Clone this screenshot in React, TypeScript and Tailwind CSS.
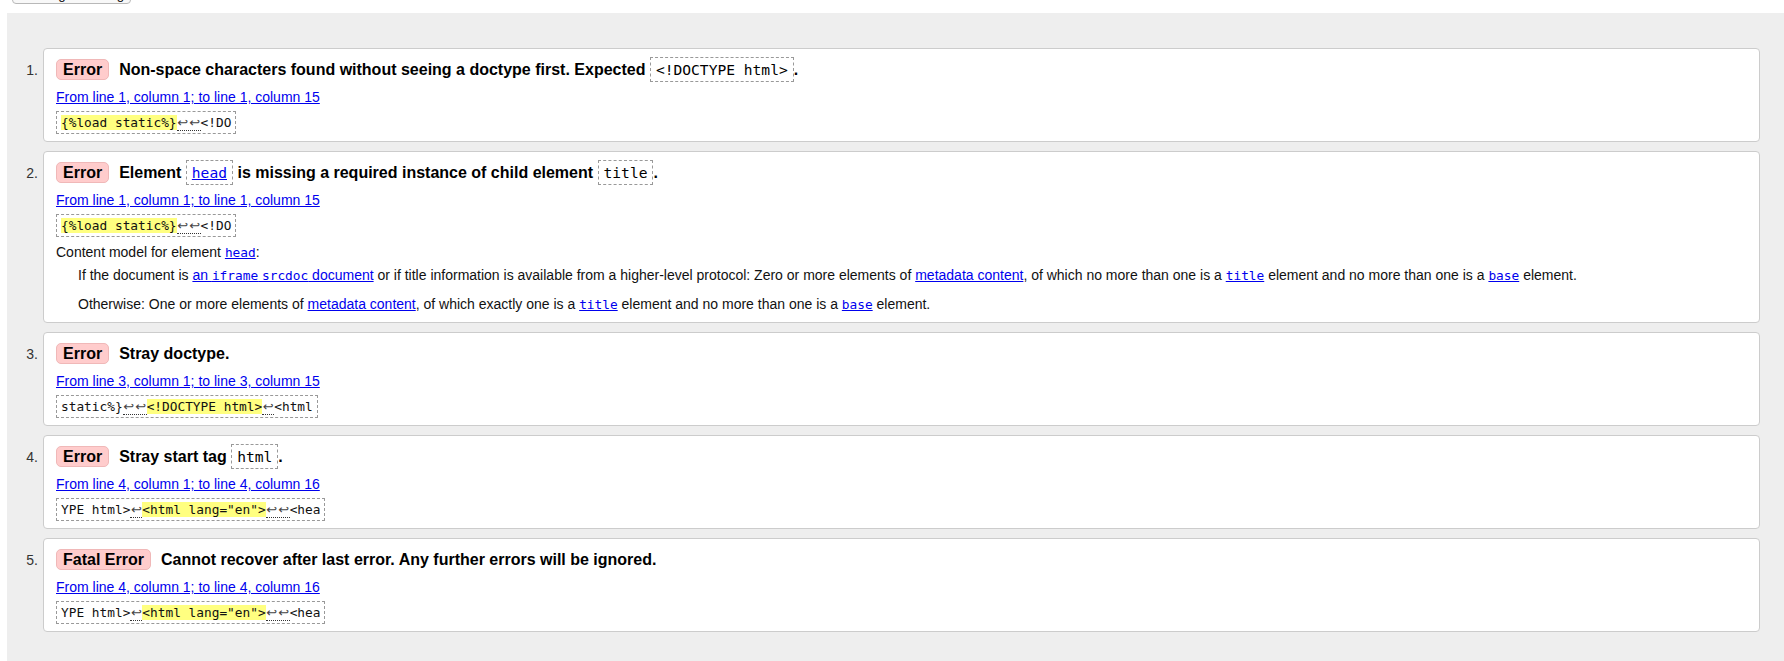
import React from "react";

type Seg = { t: string; k: "plain" | "hl" | "lf" };

interface Message {
  n: number;
  type: string;
  title: React.ReactNode;
  loc: string;
  extract: Seg[];
  extra?: React.ReactNode;
}

const sans = "font-['Liberation_Sans',Arial,sans-serif]";
const mono = "font-['DejaVu_Sans_Mono','Liberation_Mono',monospace]";

function TitleCode({ children }: { children: React.ReactNode }) {
  return (
    <code
      className={`${mono} inline-block border border-dashed border-[#999] px-[5px] text-[14.6px] leading-[23px] font-normal`}
    >
      {children}
    </code>
  );
}

function Link({ children }: { children: React.ReactNode }) {
  return <a className="text-[#0000ee] underline cursor-pointer">{children}</a>;
}

function MonoLink({ children }: { children: React.ReactNode }) {
  return (
    <a className={`${mono} text-[#0000ee] underline cursor-pointer text-[12.8px]`}>{children}</a>
  );
}

function Extract({ segs }: { segs: Seg[] }) {
  return (
    <code
      className={`${mono} inline-block border border-dashed border-[#999] px-[4px] text-[12.8px] leading-[21px] text-[#111] whitespace-pre`}
    >
      {segs.map((s, i) => {
        if (s.k === "hl")
          return (
            <span key={i} className="bg-[#ffff80]">
              {s.t}
            </span>
          );
        if (s.k === "lf")
          return (
            <span key={i} className="border-b border-dotted border-[#333]">
              {s.t.split("").map((c, j) => (
                <span
                  key={j}
                  className="inline-block w-[12px] text-center font-['DejaVu_Sans',sans-serif] text-[13px] text-[#444]"
                >
                  {c}
                </span>
              ))}
            </span>
          );
        return <span key={i}>{s.t}</span>;
      })}
    </code>
  );
}

const doctypeExtract: Seg[] = [
  { t: "{%load static%}", k: "hl" },
  { t: "↩↩", k: "lf" },
  { t: "<!DO", k: "plain" },
];

const htmlExtract: Seg[] = [
  { t: "YPE html>", k: "plain" },
  { t: "↩", k: "lf" },
  { t: '<html lang="en">', k: "hl" },
  { t: "↩↩", k: "lf" },
  { t: "<hea", k: "plain" },
];

const messages: Message[] = [
  {
    n: 1,
    type: "Error",
    title: (
      <>
        Non-space characters found without seeing a doctype first. Expected{" "}
        <TitleCode>&lt;!DOCTYPE html&gt;</TitleCode>.
      </>
    ),
    loc: "From line 1, column 1; to line 1, column 15",
    extract: doctypeExtract,
  },
  {
    n: 2,
    type: "Error",
    title: (
      <>
        Element{" "}
        <TitleCode>
          <span className="text-[#0000ee] underline">head</span>
        </TitleCode>{" "}
        is missing a required instance of child element <TitleCode>title</TitleCode>.
      </>
    ),
    loc: "From line 1, column 1; to line 1, column 15",
    extract: doctypeExtract,
    extra: (
      <div className="text-[14px] leading-[20px] text-[#111]">
        <p className="mt-[5px]">
          Content model for element <MonoLink>head</MonoLink>:
        </p>
        <div className="pl-[22px]">
          <p className="mt-[2px]">
            If the document is{" "}
            <Link>
              an <span className={`${mono} text-[12.8px]`}>iframe</span>{" "}
              <span className={`${mono} text-[12.8px]`}>srcdoc</span> document
            </Link>{" "}
            or if title information is available from a higher-level protocol: Zero or more
            elements of <Link>metadata content</Link>, of which no more than one is a{" "}
            <MonoLink>title</MonoLink> element and no more than one is a <MonoLink>base</MonoLink>{" "}
            element.
          </p>
          <p className="mt-[8px]">
            Otherwise: One or more elements of <Link>metadata content</Link>, of which exactly one
            is a <MonoLink>title</MonoLink> element and no more than one is a{" "}
            <MonoLink>base</MonoLink> element.
          </p>
        </div>
      </div>
    ),
  },
  {
    n: 3,
    type: "Error",
    title: <>Stray doctype.</>,
    loc: "From line 3, column 1; to line 3, column 15",
    extract: [
      { t: "static%}", k: "plain" },
      { t: "↩↩", k: "lf" },
      { t: "<!DOCTYPE html>", k: "hl" },
      { t: "↩", k: "lf" },
      { t: "<html", k: "plain" },
    ],
  },
  {
    n: 4,
    type: "Error",
    title: (
      <>
        Stray start tag <TitleCode>html</TitleCode>.
      </>
    ),
    loc: "From line 4, column 1; to line 4, column 16",
    extract: htmlExtract,
  },
  {
    n: 5,
    type: "Fatal Error",
    title: <>Cannot recover after last error. Any further errors will be ignored.</>,
    loc: "From line 4, column 1; to line 4, column 16",
    extract: htmlExtract,
  },
];

function MessageCard({ m }: { m: Message }) {
  return (
    <li className="flex">
      <div className="w-[36px] shrink-0 pr-[5px] pt-[12px] text-right text-[14px] leading-[20px] text-[#333]">
        {m.n}.
      </div>
      <div className="flex-1 rounded-[4px] border border-[#cccccc] bg-white px-[12px] pt-[8px] pb-[7px]">
        <p className="text-[16px] font-bold leading-[25px] text-black">
          <strong className="mr-[10px] inline-block rounded-[5px] border border-[#f0b8b8] bg-[#ffcccc] px-[6px] leading-[19px]">
            {m.type}
          </strong>
          {m.title}
        </p>
        <p className="mt-[5px] text-[14px] leading-[20px]">
          <Link>{m.loc}</Link>
        </p>
        <p className="mt-[4px] leading-[0]">
          <Extract segs={m.extract} />
        </p>
        {m.extra}
      </div>
    </li>
  );
}

export default function App() {
  return (
    <div className={`${sans} min-h-screen bg-white text-[#111]`}>
      <div className="flex h-[4px] items-end overflow-hidden pl-[12px]">
        <button className="shrink-0 rounded-[4px] border border-[#b8b8b8] bg-[#f8f8f8] px-[6px] pb-[1px] text-[13.33px] leading-[15px] text-black">
          Message Filtering
        </button>
      </div>
      <div className="ml-[7px] mt-[9px] bg-[#eeeeee] pt-[35px] pr-[24px] pb-[40px]">
        <ol className="flex flex-col gap-[9px]">
          {messages.map((m) => (
            <MessageCard key={m.n} m={m} />
          ))}
        </ol>
      </div>
    </div>
  );
}
